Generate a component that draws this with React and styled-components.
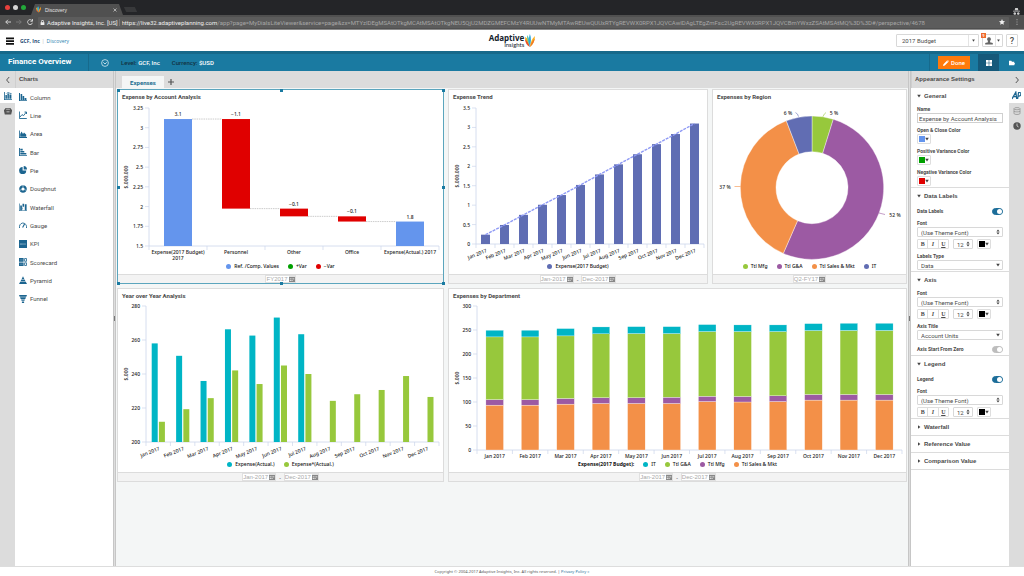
import React, { useState } from 'react';
import styled, { createGlobalStyle } from 'styled-components';

const GlobalStyle = createGlobalStyle`
  * { box-sizing: border-box; }
  body { margin: 0; background: #fff; }
  body, button, input, select {
    font-family: Roboto, "Liberation Sans", sans-serif;
    font-size: 6px;
    color: #4a4a4a;
  }
  button { padding: 0; border: 0; background: none; cursor: pointer; }
  a { text-decoration: none; }
  svg { display: block; flex: none; }
`;

const Page = styled.div`
  display: flex;
  flex-direction: column;
  min-height: 100vh;
`;

/* ---------- browser ---------- */

const TabStrip = styled.div`
  display: flex;
  align-items: flex-end;
  height: 15px;
  padding: 0 4px;
  background: #242528;
`;

const Lights = styled.div`
  display: flex;
  gap: 3px;
  padding: 0 5px 5px 1px;
`;

const Light = styled.span`
  width: 5px;
  height: 5px;
  border-radius: 50%;
  background: ${props => props.color};
`;

const BrowserTab = styled.div`
  display: flex;
  align-items: center;
  gap: 4px;
  width: 92px;
  height: 11px;
  padding: 0 6px 0 5px;
  background: #505050;
  clip-path: polygon(4px 0, 88px 0, 100% 100%, 0 100%);
  color: #e4e4e4;
  font: 5px "Liberation Sans", sans-serif;

  span { flex: 1; }
`;

const NewTab = styled.span`
  width: 11px;
  height: 5px;
  margin: 0 auto 3px 2px;
  background: #38393b;
  transform: skewX(25deg);
`;

const AddressBar = styled.div`
  display: flex;
  align-items: center;
  gap: 5px;
  height: 15px;
  padding: 0 4px 0 5px;
  border-bottom: 1px solid #8b8b8b;
  background: #505050;
`;

const Url = styled.div`
  display: flex;
  align-items: center;
  flex: 1;
  min-width: 0;
  height: 11px;
  padding: 0 4px 0 2px;
  border-radius: 1px;
  background: #5c5c5c;
  color: #a6a6a6;
  white-space: nowrap;

  b { font-weight: 400; color: #eee; }
`;

const Site = styled.b`
  margin: 0 2px;
  padding-right: 1px;
  border-right: 1px solid #777;
`;

const Path = styled.span`
  flex: 1;
  overflow: hidden;
`;

/* ---------- header ---------- */

const Header = styled.header`
  display: grid;
  grid-template-columns: 1fr auto 1fr;
  align-items: center;
  height: 21px;
  padding: 0 6px;
`;

const Crumbs = styled.nav`
  display: flex;
  align-items: center;
  gap: 2px;
  font: 5px "Open Sans", sans-serif;

  button { margin-right: 4px; }
  a { color: #2a7fb0; }
  a:first-of-type { color: #1d4a73; font-weight: 700; }
  span { color: #bbb; }
`;

const Logo = styled.div`
  display: flex;
  align-items: center;
  gap: 1px;
  color: #14222d;
  text-align: right;
  font: 700 8px/8px "Noto Sans", sans-serif;

  small {
    display: block;
    font: 400 6px/5px Lato, sans-serif;
  }
`;

const Tools = styled.div`
  display: flex;
  justify-content: flex-end;
  gap: 3px;
`;

const SelectBox = styled.div`
  display: flex;
  align-items: center;
  width: ${props => props.$width || '100%'};
  height: 10px;
  padding-right: 2px;
  border: 1px solid #d8d8d8;
  border-radius: 1px;
  background: #fff;

  select {
    flex: 1;
    align-self: stretch;
    min-width: 0;
    padding: 0 0 0 ${props => props.$indent || 3}px;
    border: 0;
    background: none;
    appearance: none;
    outline: none;
  }
`;

const VersionBox = styled(SelectBox)`
  height: 13px;
  padding-right: 3px;

  select {
    margin-right: 3px;
    border-right: 1px solid #e4e4e4;
  }
`;

const ToolButton = styled.button`
  position: relative;
  display: flex;
  align-items: center;
  justify-content: space-evenly;
  width: ${props => props.$width}px;
  height: 13px;
  border: 1px solid #d8d8d8;
  border-radius: 1px;
  font-size: 9px;
  font-weight: 500;
`;

const Divider = styled.i`
  width: 1px;
  height: 100%;
  background: #e4e4e4;
`;

const Badge = styled.span`
  position: absolute;
  top: -2px;
  left: -2px;
  width: 5px;
  height: 5px;
  background: #ee6a2c;
  color: #fff;
  font-size: 4px;
  line-height: 5px;
`;

const TitleBar = styled.div`
  display: flex;
  align-items: stretch;
  height: 20px;
  border-top: 3px solid #17698a;
  background: #1a7aa1;
  color: #fff;
`;

const Title = styled.h1`
  width: 89px;
  margin: 0;
  padding-left: 8px;
  border-right: 1px solid #176a8c;
  font-size: 8px;
  font-weight: 700;
  line-height: 16px;
`;

const Scope = styled.div`
  display: flex;
  align-items: center;
  flex: 1;
  padding-left: 12px;
  font-weight: 500;

  svg { margin-right: 12px; }
  span { margin-right: 12px; }
  b { color: #12313f; font-weight: 500; }
`;

const DoneCell = styled.div`
  display: flex;
  align-items: center;
  padding: 0 8px;
  border-left: 1px solid #176a8c;
`;

const DoneButton = styled.button`
  display: flex;
  align-items: center;
  justify-content: center;
  gap: 2px;
  width: 32px;
  height: 13px;
  background: #ff7a0c;
  color: #fff;
  font-weight: 500;
`;

const ModeButton = styled.button`
  display: grid;
  place-items: center;
  width: ${props => (props.$active ? 21 : 25)}px;
  background: ${props => (props.$active ? '#15597a' : 'none')};
`;

/* ---------- workspace ---------- */

const Workspace = styled.div`
  display: flex;
  flex: 1;
  border-bottom: 1px solid #ddd;
`;

const Rail = styled.div`
  display: flex;
  flex-direction: column;
  width: 15px;
  background: #dcdcdc;
`;

const RailButton = styled.button`
  display: grid;
  place-items: center;
  height: ${props => (props.$head ? 17 : 15)}px;
  background: ${props => (props.$active ? '#fff' : 'none')};
`;

const Panel = styled.div`
  width: 98px;
  background: #fff;
`;

const PanelTitle = styled.h2`
  height: 17px;
  margin: 0;
  padding-left: 3px;
  border-left: 1px solid #cfcfcf;
  background: #dcdcdc;
  font: 700 6px/17px "Liberation Sans", sans-serif;
`;

const Splitter = styled.div`
  display: grid;
  place-items: center;
  width: 3px;
  border: solid #c6c6c6;
  border-width: 0 1px 0 1px;
  background: #dedede;

  &::after {
    content: "";
    width: 1px;
    height: 5px;
    background: #777;
  }
`;

const ChartList = styled.ul`
  display: grid;
  grid-auto-rows: 1fr;
  height: 220px;
  margin: 0;
  padding: 0 4px;
  list-style: none;

  button {
    display: flex;
    align-items: center;
    gap: 3px;
    width: 100%;
    height: 100%;
  }
`;

const Center = styled.main`
  flex: 1;
  min-width: 0;
  background: #f4f6f6;
`;

const Tabs = styled.div`
  display: flex;
  align-items: flex-end;
  gap: 4px;
  height: 17px;
  padding-left: 6px;
  background: #dcdcdc;
`;

const Tab = styled.button`
  width: 42px;
  height: 12px;
  background: #f4f6f6;
  color: #1c6d90;
  font-weight: 700;
`;

const AddTab = styled.button`
  height: 12px;
`;

const Board = styled.div`
  display: grid;
  grid-template-columns: minmax(0, 327fr) minmax(0, 260fr) minmax(0, 195fr);
  gap: 4px;
  padding: 1px;
`;

const CardFrame = styled.section`
  position: relative;
  grid-column: span ${props => props.$span || 1};
  border: 1px solid ${props => (props.$selected ? '#5ba5bd' : '#dcdcdc')};
  background: #fff;
`;

const CardTitle = styled.h3`
  height: 13px;
  margin: 0;
  padding-left: 4px;
  font-size: 6px;
  font-weight: 700;
  line-height: 13px;
`;

const Handle = styled.span`
  position: absolute;
  top: ${props => props.$y}%;
  left: ${props => props.$x}%;
  width: 3px;
  height: 3px;
  margin: -1px 0 0 -1px;
  background: #1a7aa1;
`;

const Plot = styled.svg`
  width: 100%;
  height: ${props => props.$height}px;
  font: 500 5px "Noto Sans", sans-serif;

  text { fill: #222; dominant-baseline: central; }
`;

const LegendRow = styled.div`
  display: flex;
  justify-content: center;
  gap: 9px;
  height: 12px;
  color: #111;
  font: 500 5px/8px "Noto Sans", sans-serif;
`;

const LegendItem = styled.span`
  display: flex;
  gap: 3px;

  &::before {
    content: "";
    width: 5px;
    height: 5px;
    margin-top: 2px;
    border-radius: 50%;
    background: ${props => props.color};
  }
`;

const CardFooter = styled.div`
  display: flex;
  justify-content: center;
  align-items: center;
  gap: 3px;
  height: 9px;
  border-top: 1px solid #dcdcdc;
  background: #f3f3f3;
`;

const DateChip = styled.button`
  display: flex;
  align-items: center;
  gap: 1px;
  height: 8px;
  padding: 0;
  border: 1px solid #e0e0e0;
  background: #fff;
  color: #a8a8a8;
  font: 6px/6px "Liberation Sans", sans-serif;
`;

/* ---------- settings ---------- */

const SectionFrame = styled.section`
  border-bottom: 1px solid #dcdcdc;
`;

const SectionHead = styled.button`
  display: flex;
  align-items: center;
  gap: 3px;
  width: 100%;
  height: 16px;
  padding-left: 6px;
  font: 700 6px "Liberation Sans", sans-serif;
`;

const Fields = styled.div`
  display: flex;
  flex-direction: column;
  gap: 4px;
  padding: 2px 6px 1px;
`;

const FieldLabel = styled.label`
  display: block;
  font-size: 5px;
  font-weight: 700;
  line-height: 7px;
`;

const TextInput = styled.input`
  display: block;
  width: 100%;
  height: 10px;
  padding: 0 1px;
  border: 1px solid #d0d0d0;
  outline: none;
`;

const SwatchButton = styled.button`
  display: flex;
  align-items: center;
  justify-content: space-between;
  width: 14px;
  height: 10px;
  padding: 0 1px;
  border: 1px solid #dedede;
  border-radius: 1px;

  i { width: 6px; height: 6px; background: ${props => props.color}; }
`;

const FontTools = styled.div`
  display: flex;
  gap: 4px;
  margin-top: 2px;
`;

const StyleGroup = styled.div`
  display: flex;
  width: 32px;
  height: 10px;
  border: 1px solid #dedede;
  border-radius: 1px;

  button { flex: 1; font: 700 6px/8px "Liberation Serif", serif; }
  button + button { border-left: 1px solid #dedede; }
`;

const ToggleRow = styled.div`
  display: flex;
  align-items: center;
  justify-content: space-between;
  height: 10px;
`;

const Toggle = styled.input`
  appearance: none;
  display: flex;
  width: 11px;
  height: 7px;
  margin: 0;
  border: 1px solid #bdbdbd;
  border-radius: 4px;
  background: #bdbdbd;
  cursor: pointer;

  &::before {
    content: "";
    width: 5px;
    height: 5px;
    margin-left: auto;
    border-radius: 50%;
    background: #fff;
  }
  &:checked { border-color: #1c6d99; background: #1c6d99; }
`;

const Footer = styled.footer`
  height: 9px;
  text-align: center;
  color: #555;
  font: 4px/9px "Noto Sans", sans-serif;

  a { color: #1c6d99; }
`;

/* ---------- icons ---------- */

const BLUE = '#1c6590';

const chartIcons = {
  Column: <path d="M0 0h1v8H0zM1.6 1h1.6v6H1.6zM3.6 3h1.6v4H3.6zM5.6 5h1.8v2H5.6zM0 7.2h8V8H0z" />,
  Line: <path d="M.4.5v7h7.4M1 6l2-2.4 1.6 1L7.4 1M5.5 1h2v2" fill="none" stroke={BLUE} strokeWidth=".9" />,
  Area: <path d="M0 .5h.8V7H8v1H0zM1.2 6.8V4l1.4-2.4L4 4l1-1.6 1 1 1.2 1v2.4z" />,
  Bar: <path d="M0 0h.9v8H0zM1.3.8h2.4v1.6H1.3zM1.3 2.9h4v1.5h-4zM1.3 4.9h6v1.6h-6zM0 7.2h8V8H0z" />,
  Pie: <path d="M3.6 1v3.5h3.7A3.6 3.6 0 1 1 3.6 1zM4.7 0A3.5 3.5 0 0 1 8 3.5H4.7z" />,
  Doughnut: (
    <g fill="none" strokeWidth="2.2">
      <circle cx="4" cy="4" r="2.7" stroke={BLUE} />
      <path d="M4 0v2.6M.4 5.4l2.2-.8M7.6 5.4l-2.2-.8" stroke="#fff" strokeWidth=".5" />
    </g>
  ),
  Waterfall: <path d="M0 .5h.6v7H8V8H0zM1.2 2.6h1.7v4.6H1.2zM3.5.8h1.6v3H3.5zM5.8 1.2h1.8v6H5.8zM3.4 4.6h.5v2h-.5z" />,
  Gauge: (
    <g fill="none" stroke={BLUE} strokeWidth=".9">
      <path d="M.5 7V5.5a3.5 3.5 0 0 1 4.8-3.2M6.5 3.2a3.5 3.5 0 0 1 1 2.3V7" />
      <path d="M3.6 6.5L6 2.2" strokeWidth="1.1" />
    </g>
  ),
  KPI: (
    <g>
      <rect width="8" height="8" />
      <path d="M1.4 3.2v1.8M2.6 3.2v1.8M3.8 3.2v1.8M5 3.2v1.8M6.2 3.2v1.8" stroke="#8fb6cc" strokeWidth=".6" />
    </g>
  ),
  Scorecard: (
    <g>
      <path d="M0 0h4.6v3.7H0zM0 4.4h4.6V8H0z" />
      <path d="M5.6.5h1.9v2.8H5.6zM5.6 4.8h1.9v2.7H5.6z" fill="none" stroke={BLUE} strokeWidth=".8" />
      <path d="M.8 1.9h3M.8 6.2h3" stroke="#8fb6cc" strokeWidth=".5" />
    </g>
  ),
  Pyramid: <path d="M4 .3l1.3 2.6H2.7zM2.4 3.5h3.2l.9 1.7h-5zM1.2 5.8h5.6L8 8H0z" />,
  Funnel: <path d="M0 0h8l-.7 1.7H.7zM1 2.3h6L6.3 4H1.7zM2 4.6h4l-.6 1.2H2.6zM2.9 6.4h2.2V8H2.9z" />,
};

const Icon = ({ size = 8, color = BLUE, children }) => (
  <svg width={size} height={size} viewBox="0 0 8 8" fill={color} aria-hidden="true">{children}</svg>
);

const Caret = ({ size = 4 }) => (
  <svg width={size} height={size} viewBox="0 0 4 4" fill="#444"><path d="M.2 .8h3.6L2 3.6z" /></svg>
);

const UpDown = () => (
  <svg width="4" height="6" viewBox="0 0 4 6" fill="#444"><path d="M.4 2.4L2 .4l1.6 2zM.4 3.6L2 5.6l1.6-2z" /></svg>
);

const Chevron = ({ left }) => (
  <Icon color="none"><path d={left ? 'M5.2 1L2.6 4l2.6 3' : 'M2.8 1l2.6 3-2.6 3'} stroke="#555" strokeWidth="1" /></Icon>
);

const Mark = ({ size }) => (
  <svg width={size} height={size * 1.3} viewBox="0 0 10 13">
    <path d="M0 3c2.4 1 4 4 4.4 8.600C1.800 9.800.2 7 0 3z" fill="#fbb21a" />
    <path d="M0 5c2 2 3.500 4 5 8C2 11.500.2 9 0 5z" fill="#e8502a" />
    <path d="M2 1c2 2.500 3 5.500 2.700 10.500C2.800 8.500 1.800 5 2 1z" fill="#5cc3a8" />
    <path d="M4.900 0c1.500 3.500 1.400 8-.1 13C3.500 8.500 3.500 4 4.900 0z" fill="#2fa8e0" />
    <path d="M9.900 2C9.900 7 8.200 10.500 5 13c.4-4.500 2-8.500 4.900-11z" fill="#fbb21a" />
    <path d="M9.900 4.500C9 8 7.600 10.500 5 13c.9-3.500 2.400-6.500 4.900-8.500z" fill="#f0742a" />
  </svg>
);

/* ---------- charts ---------- */

const AXIS = '#ccd6eb';
const months = ['Jan', 'Feb', 'Mar', 'Apr', 'May', 'Jun', 'Jul', 'Aug', 'Sep', 'Oct', 'Nov', 'Dec'].map(m => `${m} 2017`);

const makeScale = (area, min, max) => v => area.bottom - ((v - min) / (max - min)) * (area.bottom - area.top);

const Axes = ({ area, ticks, y, unit, labels, slanted }) => {
  const slot = (area.right - area.left) / labels.length;
  return (
    <g>
      <path d={`M${area.left} ${area.top}V${area.bottom}H${area.right}`} fill="none" stroke={AXIS} strokeWidth=".8" />
      {ticks.map(t => (
        <g key={t}>
          <path d={`M${area.left - 4} ${y(t)}h4`} stroke={AXIS} strokeWidth=".7" />
          <text x={area.left - 6} y={y(t)} textAnchor="end">{t}</text>
        </g>
      ))}
      {labels.concat('').map((l, i) => (
        <path key={i} d={`M${area.left + i * slot} ${area.bottom}v4`} stroke={AXIS} strokeWidth=".7" />
      ))}
      <text transform={`translate(8 ${(area.top + area.bottom) / 2}) rotate(-90)`} textAnchor="middle">{unit}</text>
      {labels.map((label, i) => {
        const x = area.left + (i + 0.5) * slot;
        if (slanted) {
          return <text key={label} transform={`translate(${x + 1} ${area.bottom + 6}) rotate(-22)`} textAnchor="end">{label}</text>;
        }
        return label.split('\n').map((line, n) => (
          <text key={line + n} x={x} y={area.bottom + 6 + n * 6} textAnchor="middle">{line}</text>
        ));
      })}
    </g>
  );
};

const WaterfallChart = () => {
  const area = { left: 31, right: 321, top: 5, bottom: 143 };
  const y = makeScale(area, 1.5, 3.25);
  const bars = [
    { label: 'Expense(2017 Budget)\n2017', from: 1.5, to: 3.11, text: '3.1', end: 3.11 },
    { label: 'Personnel', from: 1.974, to: 3.11, text: '−1.1', end: 1.974, neg: true },
    { label: 'Other', from: 1.876, to: 1.974, text: '−0.1', end: 1.876, neg: true },
    { label: 'Office', from: 1.81, to: 1.876, text: '−0.1', end: 1.81, neg: true },
    { label: 'Expense(Actual.) 2017', from: 1.5, to: 1.81, text: '1.8' },
  ];
  return (
    <Plot $height={159} viewBox="0 0 325 159">
      <Axes area={area} y={y} ticks={[1.5, 1.75, 2, 2.25, 2.5, 2.75, 3, 3.25]} unit="$,000,000" labels={bars.map(b => b.label)} />
      {bars.map((b, i) => {
        const x = area.left + 15 + i * 58;
        return (
          <g key={b.label}>
            <rect x={x} y={y(b.to)} width="28" height={y(b.from) - y(b.to)} fill={b.neg ? '#e00000' : '#6495ed'} />
            {b.end && <path d={`M${x + 28} ${y(b.end)}h30`} stroke="#aaa" strokeWidth=".6" strokeDasharray="1.5 .8" />}
            <text x={x + 14} y={y(b.to) - 5} textAnchor="middle">{b.text}</text>
          </g>
        );
      })}
    </Plot>
  );
};

const TrendChart = () => {
  const area = { left: 27, right: 255, top: 5, bottom: 141 };
  const y = makeScale(area, 0, 3.5);
  const values = [0.24, 0.49, 0.75, 1.01, 1.26, 1.52, 1.79, 2.05, 2.31, 2.57, 2.83, 3.1];
  const x = i => area.left + (i + 0.5) * 19;
  return (
    <Plot $height={159} viewBox="0 0 258 159">
      <Axes area={area} y={y} ticks={[0, 0.5, 1, 1.5, 2, 2.5, 3, 3.5]} unit="$,000,000" labels={months} slanted />
      {values.map((v, i) => <rect key={i} x={x(i) - 4.5} y={y(v)} width="9" height={area.bottom - y(v)} fill="#5f6db3" />)}
      <path
        d={`M${values.map((v, i) => `${x(i)} ${y(v)}`).join('L')}`}
        fill="none" stroke="#8f9af5" strokeWidth="1.4" strokeDasharray="3 1"
      />
    </Plot>
  );
};

const RegionChart = () => {
  const at = (deg, r) => {
    const a = (deg * Math.PI) / 180;
    return `${99 + r * Math.sin(a)} ${84.7 - r * Math.cos(a)}`;
  };
  const slices = [
    { from: 0, to: 17.3, color: '#97c83c' },
    { from: 17.3, to: 203.6, color: '#9c5aa3' },
    { from: 203.6, to: 339, color: '#f39048' },
    { from: 339, to: 360, color: '#616db3' },
  ];
  return (
    <Plot $height={159} viewBox="0 0 193 159">
      {slices.map(s => {
        const big = s.to - s.from > 180 ? 1 : 0;
        return (
          <path
            key={s.color} fill={s.color} stroke="#fff" strokeWidth=".4"
            d={`M${at(s.from, 71.7)}A71.7 71.7 0 ${big} 1 ${at(s.to, 71.7)}L${at(s.to, 36)}A36 36 0 ${big} 0 ${at(s.from, 36)}z`}
          />
        );
      })}
      <g fill="none" strokeWidth=".6">
        <path d="M110 13.6q1-3 3-4" stroke="#97c83c" />
        <path d="M85.5 13.6q-.5-3-3-4" stroke="#616db3" />
        <path d="M27.5 83.5h-6" stroke="#f39048" />
        <path d="M166 110l6 1.5" stroke="#9c5aa3" />
      </g>
      <text x="121" y="10" textAnchor="middle">5 %</text>
      <text x="75" y="10" textAnchor="middle">6 %</text>
      <text x="12" y="84" textAnchor="middle">37 %</text>
      <text x="182" y="112" textAnchor="middle">52 %</text>
    </Plot>
  );
};

const YearChart = () => {
  const area = { left: 28, right: 321, top: 4, bottom: 140 };
  const y = makeScale(area, 200, 280);
  const slot = (area.right - area.left) / 12;
  const actual = [258, 250.7, 235.9, 266.3, 262.6, 273.2, 263.4];
  const previous = [211.9, 219.3, 225.8, 242.1, 234.1, 245, 240, 224.2, 228.1, 230.6, 238.8, 226.5];
  return (
    <Plot $height={158} viewBox="0 0 325 158">
      <Axes area={area} y={y} ticks={[200, 220, 240, 260, 280]} unit="$,000" labels={months} slanted />
      {actual.map((v, i) => (
        <rect key={i} x={area.left + (i + 0.5) * slot - 6.5} y={y(v)} width="6" height={area.bottom - y(v)} fill="#00b5c5" />
      ))}
      {previous.map((v, i) => (
        <rect key={i} x={area.left + (i + 0.5) * slot + 0.7} y={y(v)} width="6" height={area.bottom - y(v)} fill="#97c83c" />
      ))}
    </Plot>
  );
};

const DepartmentChart = () => {
  const area = { left: 28, right: 453, top: 4, bottom: 148 };
  const y = makeScale(area, 0, 300);
  const slot = (area.right - area.left) / 12;
  // running totals from the bottom: sales, mfg, g&a, it
  const stacks = [
    [93.5, 105, 235.6, 249.5], [93.5, 105, 235.6, 249.5], [95.6, 107.4, 237.7, 253],
    [97, 109, 242, 256.4], [97, 109, 242.5, 257], [97, 110, 242.5, 257],
    [101, 112, 246.7, 261.3], [100, 111.6, 246.7, 260.6], [101, 113, 246.7, 260.6],
    [104, 115.7, 248.8, 263.3], [104, 115.7, 249, 264], [104, 115.7, 249, 264],
  ];
  const colors = ['#f39048', '#9c5aa3', '#97c83c', '#00b5c5'];
  return (
    <Plot $height={158} viewBox="0 0 457 158">
      <Axes area={area} y={y} ticks={[0, 50, 100, 150, 200, 250, 300]} unit="$,000" labels={months} />
      {stacks.map((stack, i) => stack.map((v, n) => {
        const base = n ? stack[n - 1] : 0;
        return (
          <rect
            key={`${i}-${n}`} x={area.left + (i + 0.5) * slot - 8.8} y={y(v)} width="17.6" height={y(base) - y(v)}
            fill={colors[n]} stroke="#fff" strokeWidth=".3"
          />
        );
      }))}
    </Plot>
  );
};

/* ---------- parts ---------- */

const handles = [[0, 0], [50, 0], [100, 0], [0, 50], [100, 50], [0, 100], [50, 100], [100, 100]];

const Card = ({ title, legend, legendTitle, dates, span, selected, children }) => (
  <CardFrame $span={span} $selected={selected}>
    <CardTitle>{title}</CardTitle>
    {children}
    <LegendRow>
      {legendTitle && <b>{legendTitle}</b>}
      {legend.map(([name, color]) => <LegendItem key={name} color={color}>{name}</LegendItem>)}
    </LegendRow>
    <CardFooter>
      {dates.map((date, i) => (
        <React.Fragment key={date}>
          {i > 0 && <span>-</span>}
          <DateChip>
            {date}
            <Icon size={6} color="#888"><path d="M0 1h8v7H0zM1 3.2v1h1.6v-1zM3.3 3.2v1h1.5v-1zM5.5 3.2v1H7v-1zM1 5.500v1h1.600v-1zM3.300 5.500v1h1.500v-1z" fillRule="evenodd" /></Icon>
          </DateChip>
        </React.Fragment>
      ))}
    </CardFooter>
    {selected && handles.map(([x, y]) => <Handle key={`${x}-${y}`} $x={x} $y={y} />)}
  </CardFrame>
);

const Section = ({ title, children }) => {
  const [open, setOpen] = useState(Boolean(children));
  return (
    <SectionFrame>
      <SectionHead onClick={() => setOpen(!open)} aria-expanded={open}>
        <svg width="4" height="4" viewBox="0 0 4 4" fill="#444"><path d={open ? 'M.2 .8h3.6L2 3.4z' : 'M1 .3L3.4 2 1 3.7z'} /></svg>
        {title}
      </SectionHead>
      {open && children && <Fields>{children}</Fields>}
    </SectionFrame>
  );
};

const ColorField = ({ label, color }) => {
  const id = label.replace(/\W+/g, '-').toLowerCase();
  return (
    <div>
      <FieldLabel htmlFor={id}>{label}</FieldLabel>
      <SwatchButton id={id} color={color}><i /><Caret /></SwatchButton>
    </div>
  );
};

const SelectField = ({ id, label, value, stepper, children }) => (
  <div>
    <FieldLabel htmlFor={id}>{label}</FieldLabel>
    <SelectBox>
      <select id={id}><option>{value}</option></select>
      {stepper ? <UpDown /> : <Caret />}
    </SelectBox>
    {children}
  </div>
);

const FontField = ({ id }) => (
  <SelectField id={id} label="Font" value="(Use Theme Font)" stepper>
    <FontTools>
      <StyleGroup>
        <button>B</button>
        <button><i>I</i></button>
        <button><u>U</u></button>
      </StyleGroup>
      <SelectBox $width="20px">
        <select aria-label="Font size"><option>12</option></select>
        <UpDown />
      </SelectBox>
      <SwatchButton color="#000" aria-label="Font color"><i /><Caret /></SwatchButton>
    </FontTools>
  </SelectField>
);

const ToggleField = ({ id, label, on }) => (
  <ToggleRow>
    <FieldLabel htmlFor={id}>{label}</FieldLabel>
    <Toggle id={id} type="checkbox" defaultChecked={on} />
  </ToggleRow>
);

const App = () => (
  <Page>
    <GlobalStyle />
    <TabStrip>
      <Lights>
        <Light color="#e8403c" />
        <Light color="#d6d6d6" />
        <Light color="#23a93a" />
      </Lights>
      <BrowserTab>
        <Mark size={5} />
        <span>Discovery</span>
        <Icon size={4} color="none"><path d="M1 1l6 6M7 1L1 7" stroke="#ccc" strokeWidth="1.5" /></Icon>
      </BrowserTab>
      <NewTab />
      <Icon size={7} color="#ccc"><path d="M2.5 0h3l.6 2.6H1.9zM0 3.2h8V4H0zM2 4.8a1.500 1.500 0 1 0 .1 0zM6 4.800a1.500 1.500 0 1 0 .1 0z" /></Icon>
    </TabStrip>
    <AddressBar>
      <Icon size={6} color="none"><path d="M8 4H1M4 1L1 4l3 3" stroke="#ddd" strokeWidth="1.2" /></Icon>
      <Icon size={6} color="none"><path d="M0 4h7M4 1l3 3-3 3" stroke="#7c7c7c" strokeWidth="1.2" /></Icon>
      <Icon size={6} color="none"><path d="M7 2.5A3.3 3.3 0 1 0 7.3 5M7.3 0v3H4.5" stroke="#ddd" strokeWidth="1.2" /></Icon>
      <Url>
        <Icon size={5} color="#eee"><path d="M1 3.5h6V8H1zM2 3.5V2a2 2 0 0 1 4 0v1.5H5V2a1 1 0 0 0-2 0v1.5z" /></Icon>
        <Site>Adaptive Insights, Inc. [US]</Site>
        <Path>
          <b>https://live32.adaptiveplanning.com</b>
          /app?page=MyDialsLiteViewer&amp;service=page&amp;zx=MTYzIDEgMSAtOTkgMCAtMSAtOTkgNEU5QjU2MDZGMEFCMzY4RUUwNTMyMTAwREUwQUUxRTYgREVWX0RPX1JQVCAwIDAgLTEgZmFsc2UgREVWX0RPX1JQVCBmYWxzZSAtMSAtMQ%3D%3D#/perspective/4678
        </Path>
        <Icon size={6} color="#eee"><path d="M4 0l1.2 2.7 2.8.3-2.1 1.9.6 2.9L4 6.3 1.5 7.8l.6-2.9L0 3l2.8-.3z" /></Icon>
      </Url>
      <Icon size={6} color="#aaa"><path d="M3.4 0h1.2v1.5H3.4zM3.4 3.2h1.2v1.5H3.4zM3.4 6.4h1.2V8H3.4z" /></Icon>
    </AddressBar>

    <Header>
      <Crumbs>
        <button aria-label="Menu"><Icon color="#111"><path d="M0 .5h8v1.7H0zM0 3.3h8V5H0zM0 6.1h8v1.7H0z" /></Icon></button>
        <a href="#company">GCF, Inc</a>
        <span>|</span>
        <a href="#discovery">Discovery</a>
      </Crumbs>
      <Logo>
        <div>Adaptive<small>Insights</small></div>
        <Mark size={10} />
      </Logo>
      <Tools>
        <VersionBox $width="83px" $indent={5}>
          <select aria-label="Version"><option>2017 Budget</option></select>
          <Caret size={3} />
        </VersionBox>
        <ToolButton $width={21} aria-label="User">
          <Badge>9</Badge>
          <Icon color="#666"><path d="M4 .3a1.9 1.9 0 0 1 1.3 3.3L5 5.2l2.8.9v1.4H.2V6.1L3 5.2l-.3-1.6A1.9 1.9 0 0 1 4 .3z" /></Icon>
          <Divider />
          <Caret size={3} />
        </ToolButton>
        <ToolButton $width={12}>?</ToolButton>
      </Tools>
    </Header>

    <TitleBar>
      <Title>Finance Overview</Title>
      <Scope>
        <Icon color="none"><circle cx="4" cy="4" r="3.4" stroke="#d5e8f0" strokeWidth=".8" /><path d="M2.3 3.3L4 5l1.7-1.7" stroke="#d5e8f0" strokeWidth=".9" /></Icon>
        <span><b>Level:</b> GCF, Inc</span>
        <span><b>Currency:</b> $USD</span>
      </Scope>
      <DoneCell>
        <DoneButton>
          <Icon size={6} color="#fff"><path d="M0 8l.6-2.4L5.2 1 7 2.8 2.400 7.400zM5.800.5L6.300 0 8 1.700l-.5.5z" /></Icon>
          Done
        </DoneButton>
      </DoneCell>
      <ModeButton $active aria-label="Grid">
        <Icon size={6} color="#fff"><path d="M0 0h3.6v3.6H0zM4.4 0H8v3.6H4.4zM0 4.4h3.6V8H0zM4.4 4.4H8V8H4.4z" /></Icon>
      </ModeButton>
      <ModeButton aria-label="Files">
        <Icon size={6} color="#fff"><path d="M0 1h3l1 1.3h3V4h1L7 7H0z" /></Icon>
      </ModeButton>
    </TitleBar>

    <Workspace>
      <Rail>
        <RailButton $head aria-label="Collapse"><Chevron left /></RailButton>
        <RailButton $active aria-label="Charts"><Icon><path d="M0 0h.8v7.2H8V8H0zM1.4 3h1.5v3.7H1.4zM3.4 1.5h1.5v5.2H3.4zM5.4 2.5h2v4.2h-2zM1.4 1.8L4 .3l3.5 1v.6L4 1z" /></Icon></RailButton>
        <RailButton aria-label="Basket"><Icon color="#555"><path d="M1.5 1h5l.7 1.5H8v1.4l-.8 3.6H.8L0 3.9V2.5h.8zM2.3 1.8L2 2.5h4l-.3-.7zM2.5 4.4v.8h3v-.8z" fillRule="evenodd" /></Icon></RailButton>
      </Rail>
      <Panel>
        <PanelTitle>Charts</PanelTitle>
        <ChartList>
          {Object.keys(chartIcons).map(name => (
            <li key={name}><button><Icon>{chartIcons[name]}</Icon>{name}</button></li>
          ))}
        </ChartList>
      </Panel>
      <Splitter />

      <Center>
        <Tabs>
          <Tab>Expenses</Tab>
          <AddTab aria-label="Add tab"><Icon size={6} color="#555"><path d="M3.2 0h1.6v3.2H8v1.6H4.8V8H3.2V4.8H0V3.2h3.2z" /></Icon></AddTab>
        </Tabs>
        <Board>
          <Card
            title="Expense by Account Analysis" selected dates={['FY2017']}
            legend={[['Ref. /Comp. Values', '#6495ed'], ['+Var', '#00a000'], ['−Var', '#e00000']]}
          >
            <WaterfallChart />
          </Card>
          <Card title="Expense Trend" dates={['Jan-2017', 'Dec-2017']} legend={[['Expense(2017 Budget)', '#5f6db3']]}>
            <TrendChart />
          </Card>
          <Card
            title="Expenses by Region" dates={['Q2-FY17']}
            legend={[['Ttl Mfg', '#97c83c'], ['Ttl G&A', '#9c5aa3'], ['Ttl Sales & Mkt', '#f39048'], ['IT', '#616db3']]}
          >
            <RegionChart />
          </Card>
          <Card
            title="Year over Year Analysis" dates={['Jan-2017', 'Dec-2017']}
            legend={[['Expense(Actual.)', '#00b5c5'], ['Expense*(Actual.)', '#97c83c']]}
          >
            <YearChart />
          </Card>
          <Card
            title="Expenses by Department" span={2} dates={['Jan-2017', 'Dec-2017']} legendTitle="Expense(2017 Budget):"
            legend={[['IT', '#00b5c5'], ['Ttl G&A', '#97c83c'], ['Ttl Mfg', '#9c5aa3'], ['Ttl Sales & Mkt', '#f39048']]}
          >
            <DepartmentChart />
          </Card>
        </Board>
      </Center>

      <Splitter />
      <Panel>
        <PanelTitle>Appearance Settings</PanelTitle>
        <Section title="General">
          <div>
            <FieldLabel htmlFor="name">Name</FieldLabel>
            <TextInput id="name" defaultValue="Expense by Account Analysis" />
          </div>
          <ColorField label="Open &amp; Close Color" color="#6495ed" />
          <ColorField label="Positive Variance Color" color="#00a000" />
          <ColorField label="Negative Variance Color" color="#e00000" />
        </Section>
        <Section title="Data Labels">
          <ToggleField id="data-labels" label="Data Labels" on />
          <FontField id="data-font" />
          <SelectField id="labels-type" label="Labels Type" value="Data" />
        </Section>
        <Section title="Axis">
          <FontField id="axis-font" />
          <SelectField id="axis-title" label="Axis Title" value="Account Units" />
          <ToggleField id="axis-zero" label="Axis Start From Zero" />
        </Section>
        <Section title="Legend">
          <ToggleField id="legend" label="Legend" on />
          <FontField id="legend-font" />
        </Section>
        <Section title="Waterfall" />
        <Section title="Reference Value" />
        <Section title="Comparison Value" />
      </Panel>
      <Rail>
        <RailButton $head aria-label="Collapse settings"><Chevron /></RailButton>
        <RailButton $active aria-label="Appearance">
          <Icon size={9} color="none"><path d="M0 7L3.4 1l.8 6M1.3 5h2.8M5 7l.8-5.5c3-1 2.8 3 0 3" stroke={BLUE} strokeWidth="1.1" /></Icon>
        </RailButton>
        <RailButton aria-label="Data">
          <Icon color="none"><path d="M1 1.8v4.6c0 1.4 6 1.4 6 0V1.8M1 4c0 1.2 6 1.2 6 0" stroke="#888" strokeWidth=".7" /><ellipse cx="4" cy="1.7" rx="3" ry="1.1" stroke="#888" strokeWidth=".7" /></Icon>
        </RailButton>
        <RailButton aria-label="History">
          <Icon color="#555"><circle cx="4" cy="4" r="3.7" /><path d="M4 1.5V4l1.6 1" stroke="#ddd" strokeWidth=".8" fill="none" /></Icon>
        </RailButton>
      </Rail>
    </Workspace>

    <Footer>Copyright © 2004-2017 Adaptive Insights, Inc. All rights reserved. | <a href="#privacy">Privacy Policy »</a></Footer>
  </Page>
);

export default App;
